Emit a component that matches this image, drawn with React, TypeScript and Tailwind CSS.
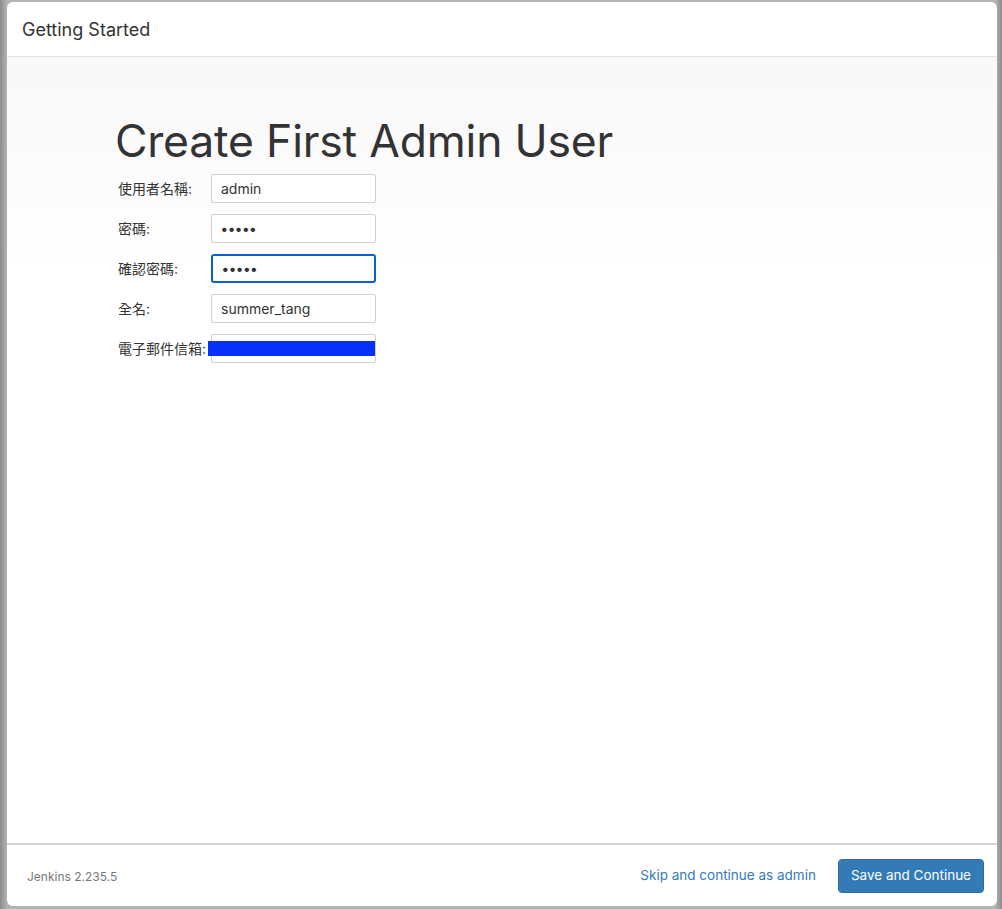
import React from "react";

const font = { fontFamily: '"Inter", "Noto Sans CJK TC", "Liberation Sans", sans-serif' };

function Row({ label, children }: { label: string; children: React.ReactNode }) {
  return (
    <div className="flex items-start h-[40px]">
      <div className="w-[93px] pt-[4px] text-[14px] text-[#333] whitespace-nowrap">{label}</div>
      {children}
    </div>
  );
}

function Field({ value, focus, dots }: { value: string; focus?: boolean; dots?: boolean }) {
  return (
    <div
      className={
        "w-[165px] h-[29px] flex items-center px-[9px] bg-white text-[14px] text-[#333] " +
        (focus ? "border-2 border-[#0b5fd0] rounded-[3px] px-[8px]" : "border border-[#d0d0d0] rounded-[2px]")
      }
    >
      <span className={dots ? "tracking-[0.5px] text-[14px] font-bold" : ""}>{value}</span>
    </div>
  );
}

export default function App() {
  return (
    <div
      className="w-[1002px] h-[909px] pt-[2px] pl-[7px] pr-[5px] pb-[3px] bg-[linear-gradient(90deg,#8c8c8c_0px,#b4b4b4_7px,#b4b4b4_995px,#8c8c8c_1002px)]"
      style={font}
    >
      <div className="w-full h-full bg-white rounded-[6px] flex flex-col overflow-hidden">
        <div className="h-[55px] border-b border-[#e2e2e2] flex items-center pl-[15px] shrink-0">
          <span className="text-[18px] text-[#333] pt-[1px]">Getting Started</span>
        </div>
        <div className="flex-1 bg-[linear-gradient(180deg,#f8f8f8_0px,#fbfbfb_100px,#ffffff_220px)] pl-[108px] pt-[56px]">
          <h1 className="text-[44.5px] leading-[56px] text-[#333] tracking-[-0.2px] mb-[5px]">Create First Admin User</h1>
          <div className="flex flex-col pl-[3px]">
            <Row label="使用者名稱:">
              <Field value="admin" />
            </Row>
            <Row label="密碼:">
              <Field value="•••••" dots />
            </Row>
            <Row label="確認密碼:">
              <Field value="•••••" dots focus />
            </Row>
            <Row label="全名:">
              <Field value="summer_tang" />
            </Row>
            <Row label="電子郵件信箱:">
              <div className="relative">
                <Field value="" />
                <div className="absolute left-[-3px] top-[7px] w-[167px] h-[15px] bg-[#0531fa]" />
              </div>
            </Row>
          </div>
        </div>
        <div className="h-[63px] border-t-2 border-[#d4d4d4] flex items-center shrink-0 pl-[20px] pr-[13px]">
          <span className="text-[12px] text-[#777] pt-[2px]">Jenkins 2.235.5</span>
          <div className="flex-1" />
          <span className="text-[13.5px] text-[#337ab7] mr-[22px]">Skip and continue as admin</span>
          <button className="h-[34px] px-[12px] rounded-[4px] bg-[#337ab7] text-white text-[13.5px] border border-[#2e6da4]">
            Save and Continue
          </button>
        </div>
      </div>
    </div>
  );
}
